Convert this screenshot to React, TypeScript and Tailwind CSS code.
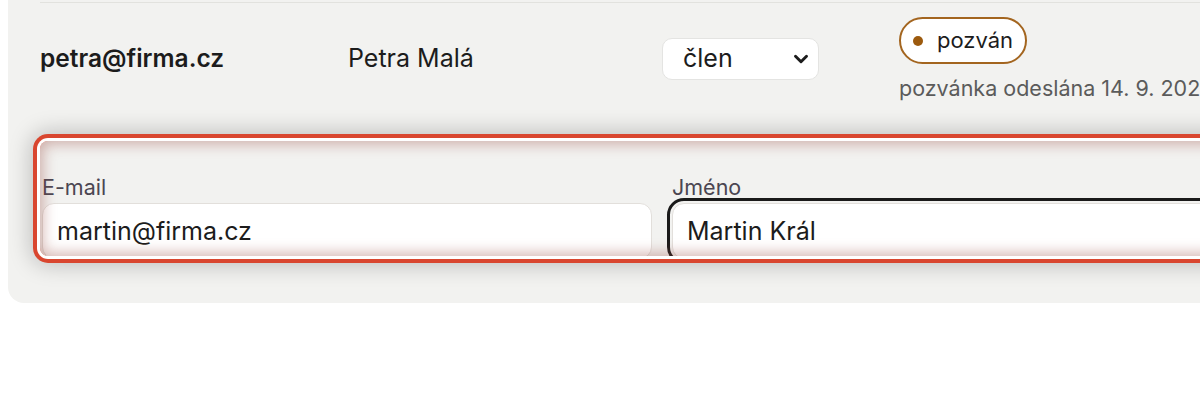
import { ChevronDown } from "lucide-react";

export default function App() {
  return (
    <div className="w-[1200px] h-[400px] overflow-hidden bg-white font-['Inter','Noto_Sans',sans-serif] text-[#1c1c1c]">
      {/* Members card, top is scrolled off */}
      <div className="ml-2 w-[1400px] rounded-b-2xl bg-[#f2f2f0] pl-8 pt-[2px] pb-[47px]">
        {/* Existing member row */}
        <div className="grid grid-cols-[308px_314px_237px_1fr] items-center border-t border-[#e2e2de] pt-[14px] pb-[41px]">
          <div className="text-[24.5px] font-semibold">petra@firma.cz</div>
          <div className="text-[25px]">Petra Malá</div>
          <div className="relative w-[157px]">
            <select
              defaultValue="clen"
              className="h-[42px] w-full appearance-none rounded-[10px] border border-[#e4e4e2] bg-white pl-5 text-[25px] text-[#1c1c1c]"
            >
              <option value="clen">člen</option>
              <option value="admin">správce</option>
            </select>
            <ChevronDown
              size={22}
              strokeWidth={3.2}
              className="pointer-events-none absolute right-[7px] top-[10px] text-[#1c1c1c]"
            />
          </div>
          <div className="flex flex-col items-start">
            <span className="flex h-[47px] items-center gap-[14px] rounded-full border-2 border-[#a3651f] bg-white pl-3 pr-3 text-[22px]">
              <span className="h-[10px] w-[10px] rounded-full bg-[#9c5a0e]" />
              pozván
            </span>
            <span className="mt-3 whitespace-nowrap text-[21.5px] leading-6 text-[#5b5b5b]">
              pozvánka odeslána 14. 9. 2024
            </span>
          </div>
        </div>

        {/* New member form row, highlighted */}
        <div className="relative h-[115px] overflow-hidden rounded-lg shadow-[0_0_0_3px_#ffffff,0_0_0_7px_#d9462f,0_0_22px_9px_rgba(0,0,0,0.22)]">
          <div className="grid grid-cols-[610px_1fr] gap-x-5 pl-0.5 pt-[34px]">
            <label className="flex flex-col gap-1">
              <span className="text-[21.5px] leading-6 text-[#4b4652]">E-mail</span>
              <input
                defaultValue="martin@firma.cz"
                className="h-[56px] rounded-xl border border-[#e2dfdb] bg-white pl-[14px] text-[25px] text-[#1c1c1c]"
              />
            </label>
            <label className="flex flex-col gap-1">
              <span className="text-[21.5px] leading-6 text-[#4b4652]">Jméno</span>
              <input
                defaultValue="Martin Král"
                className="h-[56px] rounded-xl border border-[#e2dfdb] bg-white pl-[14px] text-[25px] text-[#1c1c1c] outline-3 outline-offset-2 outline-[#1a1a1a]"
              />
            </label>
          </div>
          {/* inner glow over the fields */}
          <div className="pointer-events-none absolute inset-0 rounded-lg shadow-[inset_0_0_14px_3px_rgba(150,70,60,0.4)]" />
        </div>
      </div>
    </div>
  );
}
